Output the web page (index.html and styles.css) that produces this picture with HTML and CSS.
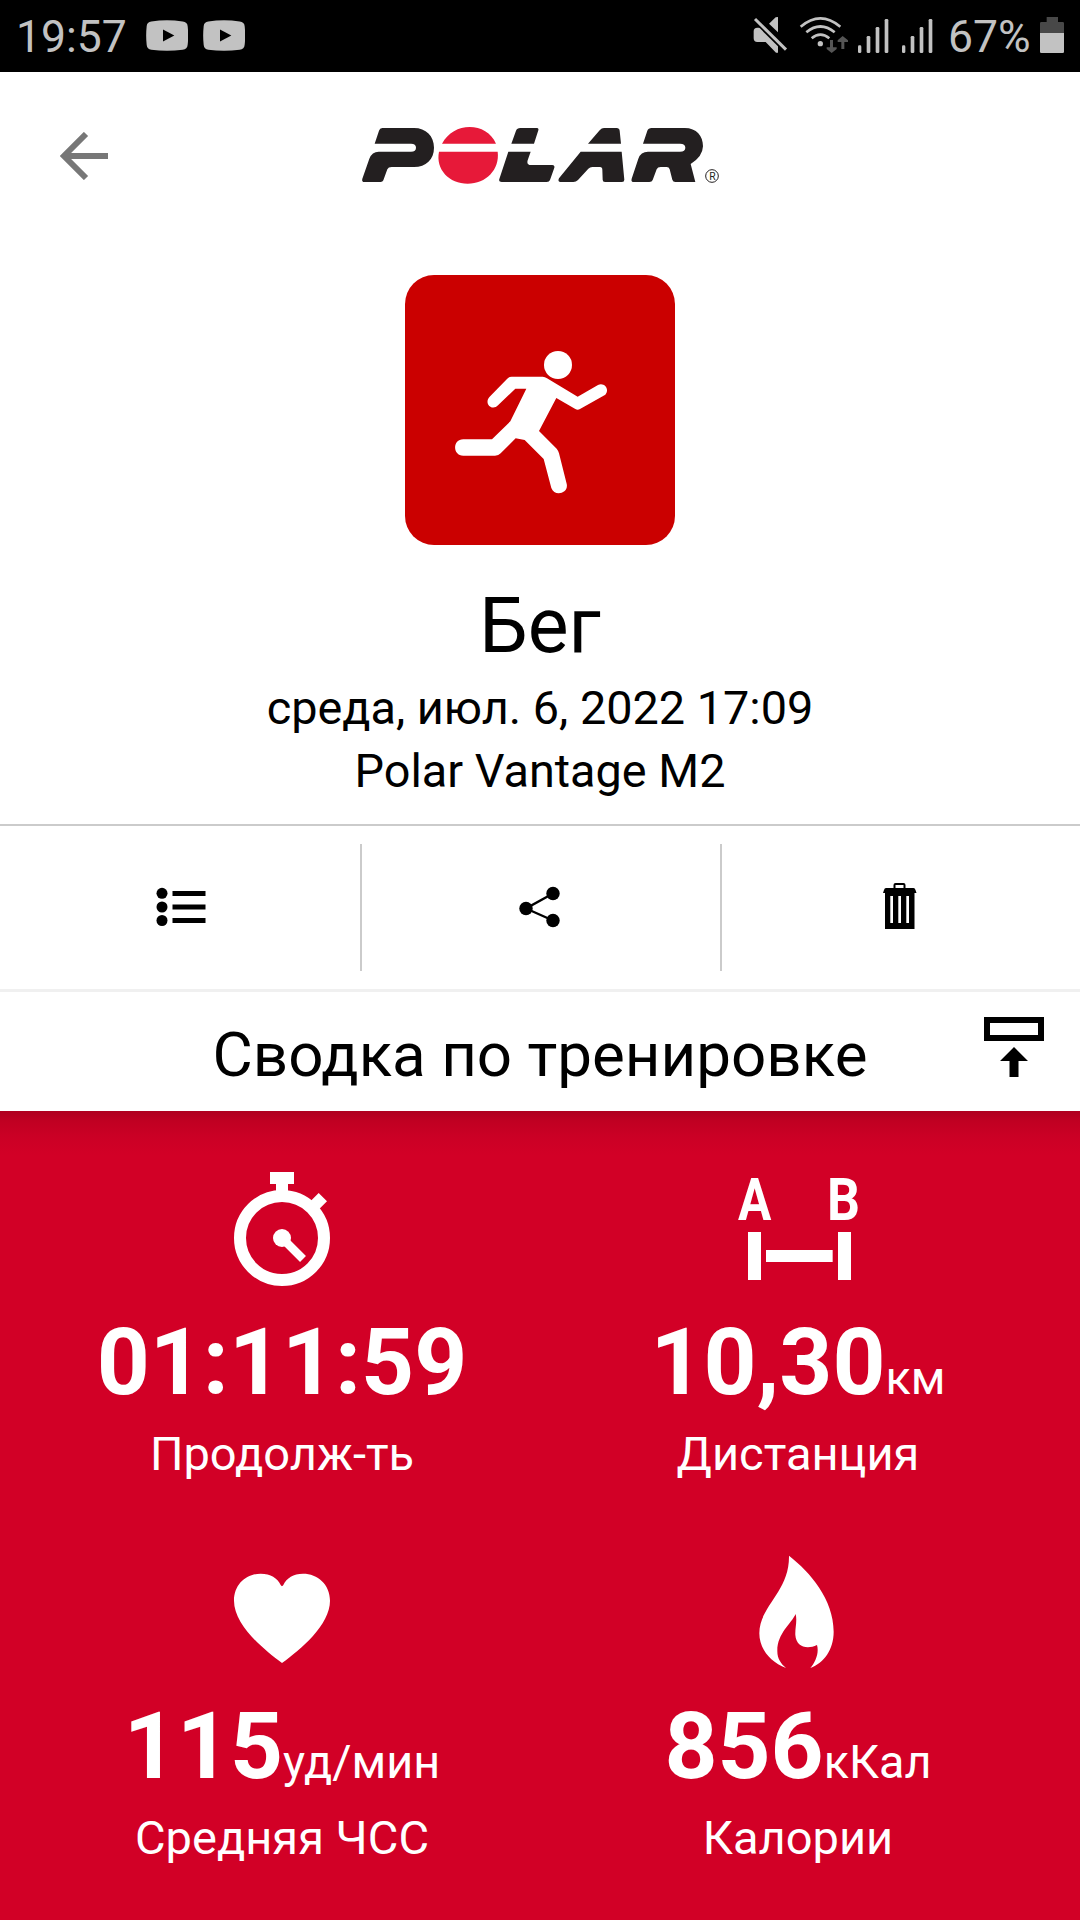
FILE: index.html
```html
<!DOCTYPE html>
<html lang="ru">
<head>
<meta charset="utf-8">
<title>Polar – Бег</title>
<link rel="stylesheet" href="styles.css">
</head>
<body>
<div class="screen">
  <div class="status">
    <span class="status-time">19:57</span>
    <svg class="status-video" viewBox="438 60 126 92"><path fill="#c2c2c2" d="M454 64Q501 57 548 64Q562 66 563 78Q566 106 563 134Q562 147 548 149Q501 155 454 149Q441 147 440 134Q437 106 440 78Q441 66 454 64Z"/><path d="M489 88L523 106L489 124Z"/></svg>
    <svg class="status-video" viewBox="438 60 126 92"><path fill="#c2c2c2" d="M454 64Q501 57 548 64Q562 66 563 78Q566 106 563 134Q562 147 548 149Q501 155 454 149Q441 147 440 134Q437 106 440 78Q441 66 454 64Z"/><path d="M489 88L523 106L489 124Z"/></svg>
    <svg class="status-icons" viewBox="96 48 546 114" fill="#c2c2c2">
      <path d="M174 51V97L147 71L167 52ZM112 83H122L174 132V158H168L137 126H112Q101 126 101 115V94Q101 83 112 83Z"/>
      <path d="M105 57L198 149" fill="none" stroke="#000" stroke-width="19"/>
      <path d="M105 57L198 149" fill="none" stroke="#c2c2c2" stroke-width="9"/>
      <g fill="none" stroke="#c2c2c2" stroke-width="8"><path d="M242 80Q301 30 361 80"/><path d="M259 97Q301 62 344 97"/><path d="M275 115Q301 93 328 115"/></g>
      <circle cx="301" cy="131" r="8"/>
      <path fill="#555" d="M330 120H339V142H350V147L335 159L320 147V142H330ZM364 147H373V126H384V121L368 108L353 121V126H364Z"/>
      <rect x="414" y="136" width="10" height="23" rx="4"/><rect x="440" y="108" width="11" height="51" rx="4"/><rect x="467" y="81" width="11" height="78" rx="4"/><rect x="494" y="57" width="11" height="102" rx="4"/>
      <rect x="546" y="136" width="10" height="23" rx="4"/><rect x="572" y="108" width="11" height="51" rx="4"/><rect x="599" y="81" width="11" height="78" rx="4"/><rect x="626" y="57" width="11" height="102" rx="4"/>
    </svg>
    <span class="status-charge">67%</span>
    <svg class="status-battery" viewBox="960 51 72 108"><path fill="#484848" d="M980 51H1014V66H1028Q1032 66 1032 70V100H960V70Q960 66 964 66H980Z"/><path fill="#c2c2c2" d="M960 99H1032V155Q1032 159 1028 159H964Q960 159 960 155Z"/></svg>
  </div>

  <header class="topbar">
    <svg class="back" viewBox="180 396 144 144" fill="none" stroke="#777" stroke-width="18"><path d="M324 468H198M258 402L192 468L258 534"/></svg>
    <svg class="logo" viewBox="60 75 1080 180" fill="#231f20">
      <path d="M121 84H222C258 84 282 108 282 143S258 201 222 201H155Q145 201 142 208L130 241Q128 246 122 246H74Q64 246 67 236L88 176Q96 155 116 155H213Q228 155 228 143T213 131H104L117 92Q119 84 127 84Z"/>
      <path fill="#e71939" d="M306 131C324 98 356 81 389 81S454 98 468 131ZM297 155H473C480 208 438 251 383 251S286 208 297 155Z"/>
      <path d="M541 84H590Q597 84 595 91L582 131H514L528 92Q531 84 541 84ZM505 155H572L563 181Q559 195 573 195H637Q645 195 643 203L630 240Q628 246 620 246H485Q475 246 478 237Z"/>
      <path d="M792 84H830Q838 84 839 92L843 131H744L779 91Q785 84 792 84ZM722 155H845L853 239Q853 246 846 246H795Q788 246 788 239L787 209Q787 201 780 201H757Q750 201 745 206L714 240Q708 246 700 246H662Q652 246 657 235Z"/>
      <path d="M935 84H1034C1070 84 1089 108 1089 139Q1088 170 1052 192L1066 246H1006Q999 246 997 239L989 208Q987 201 980 201H962Q953 201 950 208L938 240Q936 246 928 246H882Q872 246 875 236L895 176Q902 155 924 155H1020Q1036 155 1036 143T1020 131H909L922 92Q925 84 935 84Z"/>
      <circle cx="1116" cy="228" r="19" fill="none" stroke="#231f20" stroke-width="3"/>
      <text x="1117" y="239" font-size="31" text-anchor="middle">R</text>
    </svg>
  </header>

  <section class="session">
    <svg class="sport" viewBox="45 45 810 810" fill="#fff">
      <circle cx="504" cy="315" r="42"/>
      <path d="M365 350H458Q465 351 471 355L563 410L624 375C643 366 660 388 646 404L570 447Q563 451 556 447L499 414L447 513L500 566Q505 572 507 580L530 671C537 701 493 711 484 684L461 597L404 540L377 535L332 580Q326 587 315 587H220C187 587 187 538 220 538H306L361 484L409 386H376L324 436C307 454 280 431 299 410L351 357Q357 350 365 350Z"/>
    </svg>
    <h1 class="session-name">Бег</h1>
    <p class="session-info">среда, июл. 6, 2022 17:09</p>
    <p class="session-info device">Polar Vantage M2</p>
  </section>

  <nav class="actions">
    <div class="action"><svg class="action-icon" viewBox="0 0 60 60"><g transform="translate(.5 0)"><circle cx="11.500" cy="16.300" r="5.500"/><circle cx="11.500" cy="30" r="5.500"/><circle cx="11.500" cy="43.500" r="5.500"/><path d="M22 14h33v5H22zM22 27.500h33v5H22zM22 41h33v5H22z"/></g></svg></div>
    <div class="action"><svg class="action-icon" viewBox="0 0 60 60"><path d="M42 16.500L15 31.500L42 43.500" fill="none" stroke="#000" stroke-width="2.400"/><circle cx="42" cy="16.500" r="6.700"/><circle cx="15" cy="31.500" r="6.700"/><circle cx="42" cy="43.500" r="6.700"/></svg></div>
    <div class="action"><svg class="action-icon" viewBox="0 0 60 60"><path fill-rule="evenodd" d="M22.500 11V8q0-2 2-2h8q2 0 2 2v3h8q1.500 0 2 2l1 3h-2v36H14V16h-2l1-3q.5-2 2-2zM24.500 11h8V8h-8zM19.300 19v27H22V19zM27.300 19v27H30V19zM35.300 19v27H38V19z"/></svg></div>
  </nav>

  <div class="summary-head">
    <h2 class="summary-title">Сводка по тренировке</h2>
    <svg class="collapse" viewBox="0 0 60 60"><path d="M3 3H57V21H3Z" fill="none" stroke="#000" stroke-width="6"/><path d="M30 30L44 44H34.500V60H25.500V44H16Z"/></svg>
  </div>

  <main class="metrics">
    <div class="metric">
      <svg class="metric-icon" viewBox="426 54 360 360" fill="#fff"><circle cx="606" cy="264" r="126" fill="none" stroke="#fff" stroke-width="36"/><path d="M570 66H642V102H624V130H588V102H570ZM692 153L716 129L741 154L717 178Z"/><circle cx="606" cy="264" r="27"/><path d="M606 264L669 327" stroke="#fff" stroke-width="25"/></svg>
      <div class="metric-value">01:11:59</div>
      <div class="metric-label">Продолж-ть</div>
    </div>
    <div class="metric">
      <svg class="metric-icon" viewBox="324 54 360 360" fill="#fff"><text class="point" x="324" y="210" textLength="100" lengthAdjust="spacingAndGlyphs">A</text><text class="point" x="591" y="210" textLength="99" lengthAdjust="spacingAndGlyphs">B</text><path d="M354 246H393V390H354ZM624 246H663V390H624ZM408 300H608V336H408Z"/></svg>
      <div class="metric-value">10,30<span class="metric-unit">км</span></div>
      <div class="metric-label">Дистанция</div>
    </div>
    <div class="metric">
      <svg class="metric-icon" viewBox="366 36 360 360" fill="#fff"><path d="M546 369C490 328 402 255 402 182C402 133 439 101 482 101C512 101 532 114 542 135Q546 142 550 135C560 114 580 101 609 101C653 101 690 133 690 182C690 255 602 328 546 369Z"/></svg>
      <div class="metric-value">115<span class="metric-unit">уд/мин</span></div>
      <div class="metric-label">Средняя ЧСС</div>
    </div>
    <div class="metric">
      <svg class="metric-icon" viewBox="294 36 360 360" fill="#fff"><path d="M447 47C510 96 581 178 581 275C581 329 552 368 511 384C526 366 538 339 531 315C500 330 468 320 466 285C465 263 472 244 467 222C454 251 411 280 412 334C412 356 423 372 438 384C391 366 358 327 358 280C358 198 449 156 447 47Z"/></svg>
      <div class="metric-value">856<span class="metric-unit">кКал</span></div>
      <div class="metric-label">Калории</div>
    </div>
  </main>
</div>
</body>
</html>
```
FILE: styles.css
```css
* { box-sizing: border-box; }
body, h1, h2, p { margin: 0; font-weight: 400; }
body {
  background: #fff;
  color: #000;
  font-family: Roboto, "Noto Sans", sans-serif;
}
svg { display: block; flex: none; }
.screen {
  display: flex;
  flex-direction: column;
  width: 1080px;
  height: 1920px;
  overflow: hidden;
}
.screen > * { flex-shrink: 0; }

.status {
  display: flex;
  align-items: center;
  height: 72px;
  padding: 0 16px;
  background: #000;
  color: #c2c2c2;
  font-size: 44.500px;
  line-height: 72px;
}
.status-time { width: 130px; padding-top: 1px; }
.status-video { width: 42px; height: 31px; margin: -1px 15px 0 0; }
.status-icons { width: 182px; height: 38px; margin: -2px 14px 0 auto; }
.status-charge { width: 92px; padding-top: 1px; white-space: nowrap; }
.status-battery { width: 24px; height: 36px; margin-top: -2px; }

.topbar {
  display: grid;
  grid-template-columns: 300px 360px 300px;
  align-items: center;
  height: 168px;
  padding: 0 60px;
}
.back { width: 48px; height: 48px; }
.logo { width: 360px; height: 60px; margin-top: -2px; }

.session {
  display: flex;
  flex-direction: column;
  align-items: center;
  height: 584px;
  padding-top: 35px;
}
.sport {
  width: 270px;
  height: 270px;
  border-radius: 29px;
  background: #cb0000;
}
.session-name { margin-top: 35px; font-size: 77px; line-height: 92px; }
.session-info { margin-top: 5px; font-size: 46.800px; line-height: 63px; }
.session-info.device { margin-top: 0; }

.actions {
  display: grid;
  grid-template-columns: 362px 360px 358px;
  height: 168px;
  padding: 18px 0;
  border-top: 2px solid #cbcbcb;
  border-bottom: 3px solid #f0f0f0;
}
.action {
  display: flex;
  align-items: center;
  justify-content: center;
  border-right: 2px solid #cbcbcb;
}
.action:last-child { border-right: 0; }
.action-icon { width: 60px; height: 60px; margin-top: -1px; }

.summary-head {
  display: grid;
  grid-template-columns: 1fr 888px 60px;
  align-items: center;
  height: 119px;
  padding-right: 36px;
}
.summary-title {
  grid-column: 2;
  padding-top: 6px;
  font-size: 61.900px;
  line-height: 80px;
  text-align: center;
}
.collapse { width: 60px; height: 60px; margin-top: -9px; }

.metrics {
  display: grid;
  grid-template-columns: 516px 516px;
  grid-auto-rows: 384px;
  height: 809px;
  padding: 57px 24px 0;
  background: linear-gradient(#ae001f, #c00022 10px, #cb0025 26px, #d20026 44px);
  color: #fff;
}
.metric {
  display: flex;
  flex-direction: column;
  align-items: center;
}
.metric-icon { width: 120px; height: 120px; overflow: visible; }
.point { font: 700 177px Roboto, sans-serif; }
.metric-value {
  margin-top: 19px;
  font-size: 92.500px;
  font-weight: 700;
  line-height: 112px;
  white-space: nowrap;
}
.metric-unit { font-size: 46.800px; font-weight: 400; line-height: 1; }
.metric-label { margin-top: 4px; font-size: 47px; line-height: 62px; }
```
